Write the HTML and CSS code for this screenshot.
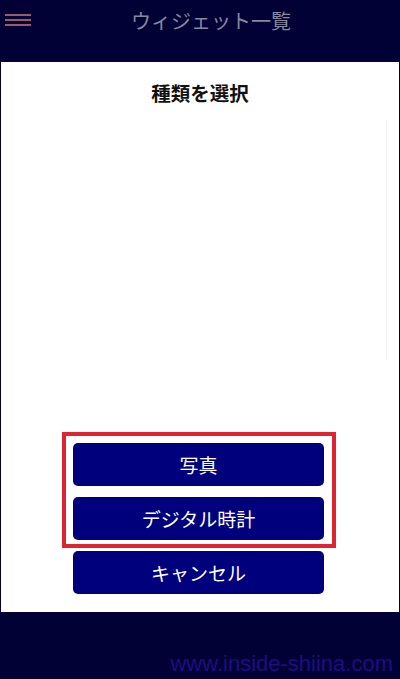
FILE: index.html
```html
<!DOCTYPE html>

<html>
<head>
    <meta charset="utf-8" />
    <link rel="stylesheet" href="styles.css">
</head>

<body>
    <div class="screen">
        <div class="top_bar">
            <div class="menu_icon">
                <span></span>
                <span></span>
                <span></span>
            </div>
            <div class="top_title">ウィジェット一覧</div>
        </div>

        <div class="sheet">
            <div class="sheet_title">種類を選択</div>
            <div class="scroll_hint"></div>
            <div class="choice_list">
                <button class="choice">写真</button>
                <button class="choice">デジタル時計</button>
                <button class="choice">キャンセル</button>
                <div class="highlight"></div>
            </div>
        </div>

        <div class="bottom_bar">
            <span class="watermark">www.inside-shiina.com</span>
        </div>
    </div>
</body>

</html>
```

FILE: styles.css
```css
body {
    margin: 0;
    background: #010136;
    font-family: "Noto Sans CJK JP", "Noto Sans", sans-serif;
}

.screen {
    width: 400px;
    height: 679px;
    display: flex;
    flex-direction: column;
    background: #010136;
}

.top_bar {
    height: 62px;
    box-sizing: border-box;
    padding-top: 7px;
    position: relative;
}

.menu_icon {
    position: absolute;
    left: 5px;
    top: 14px;
    width: 26px;
    display: flex;
    flex-direction: column;
    gap: 3.5px;
}

.menu_icon span {
    display: block;
    height: 1.5px;
    background: #9a5a6a;
}

.top_title {
    text-align: center;
    font-size: 20px;
    line-height: 28px;
    color: #8787a0;
    padding-left: 22px;
}

.sheet {
    height: 550px;
    margin: 0 1px;
    background: #ffffff;
    display: flex;
    flex-direction: column;
    position: relative;
}

.sheet_title {
    text-align: center;
    font-size: 19.5px;
    font-weight: bold;
    color: #111111;
    line-height: 28px;
    margin-top: 17px;
}

.scroll_hint {
    position: absolute;
    right: 12px;
    top: 58px;
    width: 1px;
    height: 240px;
    background: #f3f3f3;
}

.choice_list {
    margin-top: auto;
    margin-bottom: 18px;
    padding-left: 72px;
    display: flex;
    flex-direction: column;
    gap: 11px;
    position: relative;
}

.choice {
    width: 251px;
    height: 43px;
    border: none;
    border-radius: 5px;
    background: #00007d;
    color: #ffffff;
    font-family: "Noto Sans CJK JP", "Noto Sans", sans-serif;
    font-size: 19px;
    padding: 0;
}

.highlight {
    position: absolute;
    left: 61px;
    top: -11px;
    width: 266px;
    height: 108px;
    border: 4px solid #de2430;
}

.bottom_bar {
    flex: 1;
    display: flex;
    align-items: flex-end;
    justify-content: flex-end;
    padding: 0 7px 2px 0;
}

.watermark {
    font-family: "Liberation Sans", Arial, sans-serif;
    font-size: 22px;
    color: #1e0e80;
}
```
